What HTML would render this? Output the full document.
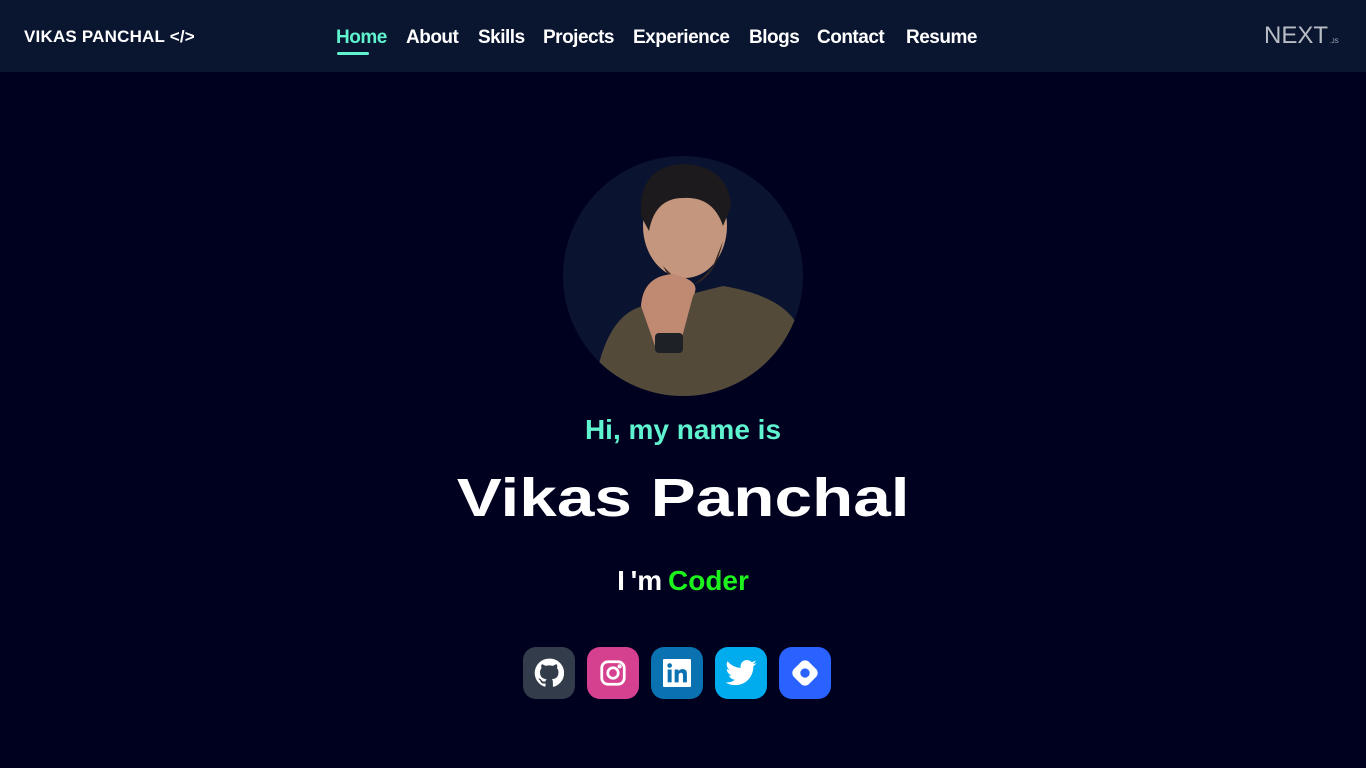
<!DOCTYPE html>
<html><head><meta charset="utf-8"><style>
*{margin:0;padding:0;box-sizing:border-box}
body{width:1366px;height:768px;background:#00001f;font-family:"Liberation Sans",sans-serif;overflow:hidden;position:relative;color:#fff}
nav{position:absolute;left:0;top:0;width:1366px;height:72px;background:#0a1530}
.logo{position:absolute;left:24px;top:27px;font-weight:bold;font-size:17px;letter-spacing:0.2px}
.links{position:absolute;left:336px;top:27px;font-weight:bold;font-size:19px;letter-spacing:-0.5px}
.links span{position:absolute;white-space:nowrap}
.home{color:#5ff3d0}
.ul{position:absolute;left:337px;top:52px;width:32px;height:3px;background:#5ff3d0;border-radius:2px}
.next{position:absolute;left:1264px;top:22px;font-size:24px;color:#b8bcc4;letter-spacing:0px;font-weight:300}
.next small{font-size:6px;margin-left:2px}
.c{position:absolute;left:0;width:1366px;text-align:center;white-space:nowrap}
.hi{top:414px;color:#5ff3d0;font-weight:bold;font-size:28px}
.name{top:467px;font-size:54px}
.name span{display:inline-block;transform:scaleX(1.25);font-weight:bold;letter-spacing:0}
.im{top:565px;font-weight:bold;font-size:28px;word-spacing:-2px}
.im b{color:#1cf21c}
.ic{position:absolute;top:647px;width:52px;height:52px;border-radius:13px;display:flex;align-items:center;justify-content:center}
</style></head><body>
<nav>
<div class="logo">VIKAS PANCHAL &lt;/&gt;</div>
<div class="links">
<span class="home" style="left:0">Home</span>
<span style="left:70px">About</span>
<span style="left:142px">Skills</span>
<span style="left:207px">Projects</span>
<span style="left:297px">Experience</span>
<span style="left:413px">Blogs</span>
<span style="left:481px">Contact</span>
<span style="left:570px">Resume</span>
</div>
<div class="ul"></div>
<div class="next">NEXT<small>.JS</small></div>
</nav>
<svg style="position:absolute;left:563px;top:156px" width="240" height="240" viewBox="0 0 240 240">
<defs><clipPath id="cp"><circle cx="120" cy="120" r="120"/></clipPath></defs>
<circle cx="120" cy="120" r="120" fill="#0a1330"/>
<g clip-path="url(#cp)">
<path d="M30 240 Q40 160 80 150 L160 130 Q220 140 235 170 L240 240Z" fill="#534a3a"/>
<ellipse cx="122" cy="70" rx="42" ry="52" fill="#c4967e"/>
<path d="M78 60 Q75 10 120 8 Q165 10 168 50 L160 70 Q150 40 120 42 Q92 42 86 75Z" fill="#1c1a1c"/>
<path d="M100 110 Q120 150 150 110 L160 85 Q150 130 120 130 Z" fill="#3a2a24"/>
<path d="M78 150 Q80 120 110 118 Q140 125 130 140 L118 185 L92 190Z" fill="#c08a72"/>
<rect x="92" y="177" width="28" height="20" rx="4" fill="#1e2226"/>
</g></svg>
<div class="c hi">Hi, my name is</div>
<div class="c name"><span>Vikas Panchal</span></div>
<div class="c im">I 'm <b>Coder</b></div>
<div class="ic" style="left:523px;background:#333c4a"><svg width="30" height="30" viewBox="0 0 24 24"><path fill="#fff" d="M12 .5A11.5 11.5 0 0 0 8.4 22.9c.6.1.8-.3.8-.6v-2c-3.2.7-3.9-1.5-3.9-1.5-.5-1.3-1.3-1.7-1.3-1.7-1-.7.1-.7.1-.7 1.2.1 1.8 1.2 1.8 1.2 1 1.8 2.8 1.3 3.4 1 .1-.8.4-1.3.8-1.6-2.6-.3-5.3-1.3-5.3-5.7 0-1.3.5-2.3 1.2-3.1-.1-.3-.5-1.5.1-3.1 0 0 1-.3 3.2 1.2a11 11 0 0 1 5.8 0c2.2-1.5 3.2-1.2 3.2-1.2.6 1.6.2 2.8.1 3.1.8.8 1.2 1.8 1.2 3.1 0 4.4-2.7 5.4-5.3 5.7.4.4.8 1.1.8 2.2v3.2c0 .3.2.7.8.6A11.5 11.5 0 0 0 12 .5z"/></svg></div>
<div class="ic" style="left:587px;background:#d6418f"><svg width="30" height="30" viewBox="0 0 24 24" fill="none" stroke="#fff" stroke-width="2.2"><rect x="3" y="3" width="18" height="18" rx="5"/><circle cx="12" cy="12" r="4.2"/><circle cx="17.3" cy="6.7" r=".6" fill="#fff"/></svg></div>
<div class="ic" style="left:651px;background:#0a72b1"><svg width="28" height="28" viewBox="0 0 24 24"><rect width="24" height="24" rx="1" fill="#fff"/><rect x="4" y="9" width="3.4" height="11" fill="#0a72b1"/><circle cx="5.7" cy="5.6" r="2" fill="#0a72b1"/><path d="M10 9h3.2v1.6c.5-1 1.8-1.9 3.6-1.9 3.4 0 3.7 2.2 3.7 5V20h-3.4v-5.4c0-1.3 0-2.8-1.7-2.8s-2 1.3-2 2.7V20H10z" fill="#0a72b1"/></svg></div>
<div class="ic" style="left:715px;background:#00acee"><svg width="34" height="34" viewBox="0 0 24 24"><path fill="#fff" d="M23 5a9 9 0 0 1-2.6.7 4.5 4.5 0 0 0 2-2.5 9 9 0 0 1-2.9 1.1A4.5 4.5 0 0 0 11.8 8.4 12.8 12.8 0 0 1 2.5 3.7a4.5 4.5 0 0 0 1.4 6 4.5 4.5 0 0 1-2-.6 4.5 4.5 0 0 0 3.6 4.5 4.5 4.5 0 0 1-2 .1 4.5 4.5 0 0 0 4.2 3.1A9 9 0 0 1 1 18.6 12.8 12.8 0 0 0 7.9 20.6c8.3 0 12.8-6.9 12.8-12.8v-.6A9 9 0 0 0 23 5z"/></svg></div>
<div class="ic" style="left:779px;background:#2962ff"><svg width="34" height="34" viewBox="0 0 24 24"><rect x="4.5" y="4.5" width="15" height="15" rx="4" transform="rotate(45 12 12)" fill="#fff"/><circle cx="12" cy="12" r="3.3" fill="#2962ff"/></svg></div>
</body></html>
